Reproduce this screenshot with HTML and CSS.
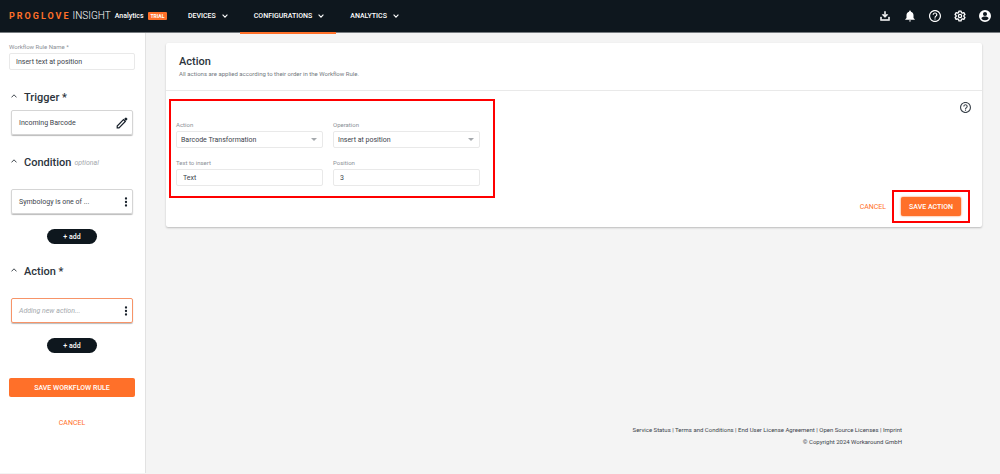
FILE: index.html
```html
<!DOCTYPE html>
<html lang="en">
<head>
<meta charset="utf-8">
<title>ProGlove Insight - Workflow Rule</title>
<link rel="stylesheet" href="styles.css">
</head>
<body>
<svg class="defs" aria-hidden="true">
  <symbol id="chevron" viewBox="0 0 6 4"><path d="M.6.7 3 3.1 5.4.7" fill="none" stroke="currentColor" stroke-width="1.1"/></symbol>
  <symbol id="caret" viewBox="0 0 6 4"><path d="M.5 3.4 3 .8l2.500 2.600" fill="none" stroke="currentColor" stroke-width=".9"/></symbol>
  <symbol id="dots" viewBox="0 0 4 10"><circle cx="2" cy="1.500" r="1.150"/><circle cx="2" cy="5" r="1.150"/><circle cx="2" cy="8.500" r="1.150"/></symbol>
  <symbol id="help" viewBox="2 2 20 20"><path d="M11 18h2v-2h-2v2zm1-16C6.480 2 2 6.480 2 12s4.480 10 10 10 10-4.480 10-10S17.520 2 12 2zm0 18c-4.410 0-8-3.590-8-8s3.590-8 8-8 8 3.590 8 8-3.590 8-8 8zm0-14c-2.210 0-4 1.790-4 4h2c0-1.100.9-2 2-2s2 .9 2 2c0 2-3 1.750-3 5h2c0-2.250 3-2.500 3-5 0-2.210-1.790-4-4-4z"/></symbol>
</svg>
<header class="topbar">
  <a class="brand" href="#"><span class="brand-name">PROGLOVE</span><span class="brand-product">INSIGHT</span><span class="brand-plan">Analytics</span><span class="badge">TRIAL</span></a>
  <nav class="nav">
    <button class="nav-item" type="button">DEVICES<svg class="chevron"><use href="#chevron"/></svg></button>
    <button class="nav-item active" type="button">CONFIGURATIONS<svg class="chevron"><use href="#chevron"/></svg></button>
    <button class="nav-item" type="button">ANALYTICS<svg class="chevron"><use href="#chevron"/></svg></button>
  </nav>
  <div class="tools">
    <button class="tool" type="button" aria-label="Downloads"><svg viewBox="0 0 24 24"><path d="M11 3h2v8l3-3 1.500 1.500L12 15 6.500 9.500 8 8l3 3zM3 14h2v5h14v-5h2v7H3z" stroke="currentColor"/></svg></button>
    <button class="tool" type="button" aria-label="Notifications"><svg viewBox="0 0 24 24"><path d="M12 23c1.200 0 2.200-1 2.200-2H9.800c0 1 1 2 2.200 2zm7-7v-5.500c0-3.400-1.900-6.200-5.200-7V2.800a1.800 1.800 0 0 0-3.600 0v.7C6.900 4.300 5 7.100 5 10.500V16l-2.500 2.500v1h19v-1z"/></svg></button>
    <button class="tool" type="button" aria-label="Help"><svg><use href="#help"/></svg></button>
    <button class="tool" type="button" aria-label="Settings"><svg viewBox="1 1 22 22"><path fill="none" stroke="currentColor" stroke-width="2.400" stroke-linejoin="round" d="M10 3h4l.6 2.700 1.900 1.100 2.600-.9 2 3.500-2 1.800v1.600l2 1.800-2 3.500-2.600-.9-1.900 1.100L14 21h-4l-.6-2.700-1.900-1.100-2.600.9-2-3.500 2-1.800v-1.600l-2-1.800 2-3.500 2.600.9 1.900-1.100z"/><circle cx="12" cy="12" r="3" fill="none" stroke="currentColor" stroke-width="2.400"/></svg></button>
    <button class="tool" type="button" aria-label="Account"><svg viewBox="2 2 20 20"><path d="M12 2a10 10 0 1 0 0 20 10 10 0 0 0 0-20zm0 3.200a3.400 3.400 0 1 1 0 6.800 3.400 3.400 0 0 1 0-6.800zm0 14a7.200 7.200 0 0 1-6-3.200c0-2 4-3.100 6-3.100s6 1.100 6 3.100a7.200 7.200 0 0 1-6 3.200z"/></svg></button>
  </div>
</header>
<div class="layout">
  <aside class="sidebar">
    <label class="label" for="rule-name">Workflow Rule Name *</label>
    <input class="control padded" id="rule-name" type="text" value="Insert text at position">
    <section class="group">
      <h2 class="group-title"><svg class="caret"><use href="#caret"/></svg>Trigger *</h2>
      <div class="step">Incoming Barcode<button class="step-button" type="button" aria-label="Edit"><svg class="pencil" viewBox="2 2 20 20"><path d="M4 20v-3L14.500 6.500l3 3L7 20z" fill="none" stroke="currentColor" stroke-width="2"/><path d="M15.500 5.500 17.700 3.300a1.200 1.200 0 0 1 1.600 0l1.400 1.400a1.200 1.200 0 0 1 0 1.600L18.500 8.500z"/></svg></button></div>
    </section>
    <section class="group">
      <h2 class="group-title"><svg class="caret"><use href="#caret"/></svg>Condition <em class="optional">optional</em></h2>
      <div class="step spaced">Symbology is one of ...<button class="step-button" type="button" aria-label="Condition menu"><svg class="dots"><use href="#dots"/></svg></button></div>
      <button class="add" type="button">+ add</button>
    </section>
    <section class="group">
      <h2 class="group-title"><svg class="caret"><use href="#caret"/></svg>Action *</h2>
      <div class="step spaced pending">Adding new action...<button class="step-button" type="button" aria-label="Action menu"><svg class="dots"><use href="#dots"/></svg></button></div>
      <button class="add" type="button">+ add</button>
    </section>
    <button class="primary wide" type="button">SAVE WORKFLOW RULE</button>
    <button class="text-button centered" type="button">CANCEL</button>
  </aside>
  <main class="main">
    <section class="card">
      <div class="card-head">
        <h1 class="card-title">Action</h1>
        <p class="card-note">All actions are applied according to their order in the Workflow Rule.</p>
      </div>
      <div class="card-body">
        <form class="fields highlight">
          <div class="field"><label class="label" for="action">Action</label><div class="select"><select class="control" id="action"><option>Barcode Transformation</option></select></div></div>
          <div class="field"><label class="label" for="operation">Operation</label><div class="select"><select class="control" id="operation"><option>Insert at position</option></select></div></div>
          <div class="field"><label class="label" for="text">Text to insert</label><input class="control padded" id="text" type="text" value="Text"></div>
          <div class="field"><label class="label" for="position">Position</label><input class="control padded" id="position" type="text" value="3"></div>
        </form>
        <button class="card-help" type="button" aria-label="Help"><svg><use href="#help"/></svg></button>
      </div>
      <div class="card-actions">
        <button class="text-button" type="button">CANCEL</button>
        <div class="highlight save-frame"><button class="primary raised" type="button">SAVE ACTION</button></div>
      </div>
    </section>
    <footer class="footer">
      <div><a href="#">Service Status</a> | <a href="#">Terms and Conditions</a> | <a href="#">End User License Agreement</a> | <a href="#">Open Source Licenses</a> | <a href="#">Imprint</a></div>
      <div>© Copyright 2024 Workaround GmbH</div>
    </footer>
  </main>
</div>
</body>
</html>
```
FILE: styles.css
```css
* { box-sizing: border-box; }
body {
  margin: 0;
  min-height: 100vh;
  display: flex;
  flex-direction: column;
  background: #f4f4f4;
  color: #3c444c;
  font: 7px/10px Roboto, "Liberation Sans", sans-serif;
}
h1, h2, p { margin: 0; }
button, input, select { font: inherit; color: inherit; }
button { padding: 0; border: 0; background: none; cursor: pointer; }
a { color: inherit; text-decoration: none; }
svg { display: block; fill: currentColor; }
.defs { position: absolute; width: 0; height: 0; }

.topbar {
  display: flex;
  height: 33px;
  padding: 0 9px;
  background: #0e171e;
  border-bottom: 1px solid #777c80;
  color: #fff;
}
.brand { display: flex; align-items: center; width: 165px; white-space: nowrap; }
.brand-name { color: #ff7029; font-size: 9px; font-weight: 700; letter-spacing: 2px; }
.brand-product { margin-left: 2px; font-size: 10px; font-weight: 300; }
.brand-plan { margin-left: 4px; font-weight: 500; }
.badge {
  margin-left: 4px;
  padding: 0 3px;
  border-radius: 1px;
  background: #ff7029;
  font-size: 5px;
  font-weight: 700;
  line-height: 8px;
}
.nav { display: flex; flex: 1; }
.nav-item {
  display: flex;
  align-items: center;
  gap: 6px;
  height: 34px;
  padding: 0 12px 0 14px;
  border-bottom: 2px solid transparent;
  font-weight: 500;
}
.nav-item.active { border-color: #ff7029; }
.chevron { width: 6px; height: 4px; }
.tools { display: flex; align-items: center; gap: 13px; }
.tool svg { width: 12px; height: 12px; }

.layout { display: flex; flex: 1; }
.sidebar {
  display: flex;
  flex-direction: column;
  width: 146px;
  margin-bottom: 1px;
  padding: 8px 10px 0 9px;
  background: #fff;
  border-right: 1px solid #e2e2e2;
}
.label { display: block; margin-bottom: 1px; color: #8b9096; font-size: 6px; line-height: 11px; }
.control {
  display: block;
  width: 100%;
  height: 17px;
  padding: 0 4px;
  border: 1px solid #e9e9e9;
  border-radius: 2px;
  background: #fff;
  appearance: none;
}
.padded { padding: 0 6px; }
.group { display: flex; flex-direction: column; padding: 0 2px; margin-top: 21px; }
.group-title {
  display: flex;
  align-items: center;
  color: #2c343c;
  font-size: 11px;
  font-weight: 500;
  line-height: 14px;
}
.caret { width: 6px; height: 4px; margin: 0 7px 4px 0; }
.optional { margin-left: 3px; color: #a5a9ad; font-size: 7px; font-weight: 400; }
.step {
  display: flex;
  align-items: center;
  justify-content: space-between;
  height: 25px;
  margin-top: 5px;
  padding: 0 4px 0 7px;
  border: 1px solid #d5d5d5;
  border-radius: 2px;
  box-shadow: 0 1px 1px #bbb;
}
.spaced { margin-top: 19px; }
.pending { border-color: #f79468; color: #a5a9ad; font-style: italic; }
.step-button { color: #17202a; }
.pencil { width: 12px; height: 12px; }
.dots { width: 4px; height: 10px; }
.add {
  align-self: center;
  width: 50px;
  height: 15px;
  margin-top: 15px;
  border-radius: 8px;
  background: #0e171e;
  color: #fff;
  font-weight: 500;
}
.primary {
  height: 19px;
  padding: 0 8px;
  border-radius: 2px;
  background: #ff7029;
  color: #fff;
  font-weight: 500;
}
.wide { margin-top: 25px; }
.raised { box-shadow: 0 0 2px #ff7029; }
.text-button { color: #ff7029; }
.centered { align-self: center; margin-top: 21px; }

.main { display: flex; flex: 1; flex-direction: column; padding: 10px 18px 26px 20px; }
.card { background: #fff; border-radius: 2px; box-shadow: 0 1px 2px #bbb; }
.card-head { padding: 12px 13px 11px; border-bottom: 1px solid #e9e9e9; }
.card-title { color: #2c343c; font-size: 11px; font-weight: 500; line-height: 14px; }
.card-note { color: #737980; font-size: 6px; line-height: 10px; }
.card-body { display: flex; justify-content: space-between; padding: 8px 11px 0 3px; }
.highlight { border: 2px solid #f00; }
.fields {
  display: grid;
  grid-template-columns: 1fr 1fr;
  gap: 9px 10px;
  width: 326px;
  padding: 18px 13px 10px 5px;
}
.select { position: relative; }
.select::after {
  content: "";
  position: absolute;
  top: 7px;
  right: 6px;
  border: 3px solid transparent;
  border-top-color: #a5a9ad;
  border-bottom: 0;
}
.card-help { align-self: flex-start; margin-top: 3px; }
.card-help svg { width: 11px; height: 11px; }
.card-actions {
  display: flex;
  align-items: center;
  justify-content: flex-end;
  gap: 6px;
  margin-top: -8px;
  padding: 0 12px 4px;
}
.save-frame { display: flex; padding: 5px 7px; }
.footer { margin-top: auto; padding-right: 80px; font-size: 6px; line-height: 12px; text-align: right; }
```
